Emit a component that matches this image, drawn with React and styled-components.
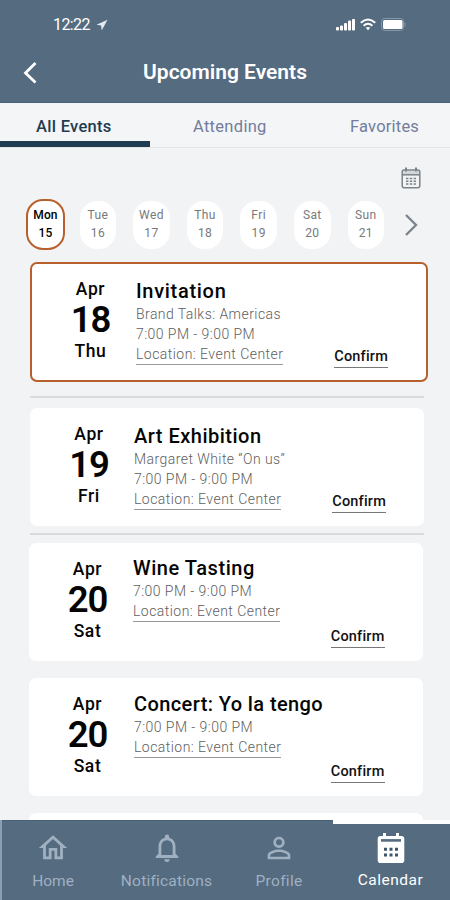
import React from 'react';
import styled, { createGlobalStyle, css } from 'styled-components';
import { MdOutlineHome, MdNotificationsNone, MdPersonOutline } from 'react-icons/md';


const colors = {
  slate: '#546b80',
  navy: '#1f3c50',
  page: '#f1f3f5',
  rust: '#b8602c',
  grey: '#77797b',
  muted: '#a0b0c1',
};

const GlobalStyle = createGlobalStyle`
  * {
    box-sizing: border-box;
  }

  body {
    margin: 0;
    font-family: Roboto, "Liberation Sans", sans-serif;
    background: ${colors.page};
  }
`;

const Screen = styled.div`
  display: flex;
  flex-direction: column;
  width: 450px;
  height: 900px;
  overflow: hidden;
  background: ${colors.page};
`;

const Header = styled.header`
  flex: none;
  height: 103px;
  background: ${colors.slate};
  border-bottom: 1px solid #47647e;
  color: #fff;
`;

const StatusBar = styled.div`
  display: flex;
  align-items: center;
  justify-content: space-between;
  height: 49px;
  padding: 0 44px 0 53px;
`;

const StatusGroup = styled.div`
  display: flex;
  align-items: center;
  gap: ${props => props.$gap}px;
`;

const Clock = styled.span`
  font-size: 16px;
  line-height: 20px;
  letter-spacing: -0.6px;
`;

const TitleBar = styled.div`
  display: grid;
  grid-template-columns: 60px 1fr 60px;
  align-items: center;
  height: 46px;

  svg {
    margin-left: 23px;
  }

  h1 {
    margin: 0;
    font-size: 21px;
    font-weight: 600;
    line-height: 26px;
    letter-spacing: 0;
    text-align: center;
  }
`;

const Tabs = styled.nav`
  display: grid;
  grid-template-columns: 150px 159px 141px;
  flex: none;
  height: 45px;
  background: #f3f5f7;
  border-bottom: 1px solid #e3e6e9;
`;

const Tab = styled.a`
  padding: 12px 0 0 ${props => props.$indent}px;
  font-size: 16.5px;
  line-height: 24px;
  letter-spacing: ${props => props.$spacing}px;
  color: #747c9c;

  ${props => props.$active && css`
    color: ${colors.navy};
    font-weight: 500;
    border-bottom: 6px solid ${colors.navy};
  `}
`;

const Toolbar = styled.div`
  display: flex;
  justify-content: flex-end;
  flex: none;
  height: 51px;
  padding: 19px 29px 0 0;
`;

const Week = styled.div`
  display: flex;
  align-items: center;
  flex: none;
  gap: 17px;
  height: 51px;
  padding-left: 26px;

  svg {
    margin-left: 3px;
  }
`;

const Day = styled.div`
  display: flex;
  flex-direction: column;
  align-items: center;
  justify-content: center;
  width: 36.6px;
  height: 48px;
  padding-bottom: 2px;
  border-radius: 17px;
  background: #fff;
  color: ${colors.grey};
  font-size: 12px;
  line-height: 18px;
  letter-spacing: 0.4px;

  ${props => props.$active && css`
    width: 39px;
    height: 51px;
    margin-right: -2.4px;
    border: 2px solid ${colors.rust};
    color: #000;
    font-weight: 500;
    letter-spacing: 0.1px;
  `}
`;

const List = styled.main`
  flex: 1;
  min-height: 0;
  padding: 12px 22px 0 28px;
  overflow: hidden;
`;

const Rule = styled.hr`
  width: 394px;
  height: 2px;
  margin: ${props => props.$margin};
  border: 0;
  background: #d8dbde;
`;

const Card = styled.article`
  display: grid;
  grid-template-columns: 75px 1fr auto;
  width: ${props => (props.$active ? 398 : 394)}px;
  height: ${props => (props.$active ? 120 : 118)}px;
  margin: 0 0 ${props => props.$gap || 0}px ${props => props.$shift || 0}px;
  padding: ${props => (props.$active ? '0 38px 12px 28px' : '0 38px 13px 27px')};
  border-radius: 7px;
  background: #fff;

  ${props => props.$active && css`
    border: 2px solid ${colors.rust};
  `}
`;

const DateBlock = styled.div`
  width: ${props => (props.$active ? 61 : 64)}px;
  padding-top: ${props => props.$top}px;
  font-size: 17.5px;
  font-weight: 500;
  line-height: 24px;
  letter-spacing: 0.6px;
  text-align: center;
  color: #050505;

  strong {
    display: block;
    font-size: 36.5px;
    font-weight: 600;
    line-height: 38px;
    letter-spacing: -1px;
  }
`;

const Details = styled.div`
  padding: ${props => props.$top}px 0 0 ${props => props.$indent}px;
  font-size: 14px;
  font-weight: 300;
  line-height: 20px;
  letter-spacing: 0.44px;
  color: #606060;
  white-space: nowrap;

  h2 {
    margin: 0;
    color: #050505;
    font-size: 20px;
    font-weight: 500;
    line-height: 25px;
    letter-spacing: ${props => props.$spacing}px;
  }
`;

const Location = styled.a`
  display: inline-block;
  border-bottom: 1px solid #999;
  letter-spacing: 0.46px;
`;

const Confirm = styled.a`
  align-self: end;
  border-bottom: 1.5px solid #777;
  color: #111;
  font-size: 14.5px;
  font-weight: 500;
  line-height: 20px;
  letter-spacing: 0.2px;
`;

const BottomNav = styled.nav`
  display: grid;
  grid-template-columns: 106px 117px 108px 117px;
  flex: none;
  height: 80px;
  border-left: 2px solid #8b9fb3;
  background: ${colors.slate};
`;

const NavItem = styled.a`
  display: flex;
  flex-direction: column;
  align-items: center;
  padding: 10px ${props => props.$inset || 0}px 0 0;
  border-top: 1px solid #47607a;
  color: ${colors.muted};
  font-size: 15.5px;
  letter-spacing: ${props => props.$spacing || 0}px;

  span {
    line-height: 22px;
    margin-top: 4.5px;
  }

  ${props => props.$active && css`
    padding-top: 8px;
    padding-left: 1px;
    border-top: 4px solid #fff;
    color: #fff;
  `}
`;

const LocationArrow = () => (
  <svg width="12" height="12" viewBox="0 0 12 12">
    <path d="M11.5 .8L.5 5.8l4.6.8.6 5z" fill="#e5eaee" />
  </svg>
);

const Signal = () => (
  <svg width="19" height="13" viewBox="0 0 19 13" fill="#fff">
    <rect x="0" y="9" width="3" height="3.5" rx="1" />
    <rect x="4" y="7.5" width="3" height="5" rx="1" />
    <rect x="8" y="5" width="3" height="7.5" rx="1" />
    <rect x="12" y="2.5" width="3" height="10" rx="1" />
    <rect x="16" y="1" width="3" height="11.5" rx="1" />
  </svg>
);

const Wifi = () => (
  <svg width="16" height="13" viewBox="0 0 16 13" fill="none" stroke="#fff" strokeWidth="2">
    <path d="M.8 4.8Q8-1.8 15.2 4.8M3.6 7.7q4.4-3.9 8.8 0" />
    <path d="M5.7 9.8L8 12.3l2.3-2.5Q8 8 5.7 9.8z" fill="#fff" stroke="none" />
  </svg>
);

const Battery = () => (
  <svg width="25" height="13" viewBox="0 0 25 13">
    <rect x=".5" y=".5" width="22" height="12" rx="3" fill="none" stroke="#8797a6" />
    <rect x="2" y="2" width="19.5" height="9" rx="1.5" fill="#fff" />
    <path d="M24 4.5v4" stroke="#8797a6" />
  </svg>
);

const Chevron = ({ color, d, width }) => (
  <svg width="14" height="24" viewBox="0 0 14 24" fill="none" stroke={color} strokeWidth={width}>
    <path d={d} />
  </svg>
);

const CalendarOutline = () => (
  <svg width="20" height="22" viewBox="0 0 20 22" fill="none" stroke="#7b8389" strokeWidth="1.5">
    <rect x="1.2" y="3" width="17.6" height="17.8" rx="2" />
    <path d="M2 4h16v3H2z" fill="#d3d7da" stroke="none" />
    <path d="M1.2 7.8h17.6" />
    <path d="M5 .5v4M15 .5v4" strokeWidth="2" />
    <path d="M5 11.5h2.4m1.4 0h2.4m1.4 0H15M5 14.2h2.4m1.4 0h2.4m1.4 0H15M5 17h2.4m1.4 0h2.4m1.4 0H15" strokeWidth="1.4" />
  </svg>
);

const CalendarSolid = () => (
  <svg width="28" height="32" viewBox="0 0 28 32">
    <path d="M6 1h3v3h10V1h3v3h2.5a2.8 2.8 0 0 1 2.8 2.8v21.4a2.8 2.8 0 0 1-2.8 2.8h-21A2.8 2.8 0 0 1 .7 28.2V6.8A2.8 2.8 0 0 1 3.5 4H6z" fill="#fff" />
    <path d="M4 8.4h20" stroke={colors.slate} strokeWidth="2.6" />
    <path d="M7 17.3h3m2.5 0h3m2.5 0h3M7 23h3m2.5 0h3m2.5 0h3" stroke="#3c566e" strokeWidth="3" />
  </svg>
);

const days = [
  ['Mon', 15], ['Tue', 16], ['Wed', 17], ['Thu', 18], ['Fri', 19], ['Sat', 20], ['Sun', 21],
];

const EventCard = ({
  day, weekday, title, subtitle, active, shift, gap, dateTop, top, indent, spacing = 0.5,
}) => (
  <Card $active={active} $shift={shift} $gap={gap}>
    <DateBlock $active={active} $top={dateTop}>
      Apr
      <strong>{day}</strong>
      {weekday}
    </DateBlock>
    <Details $top={top} $indent={indent} $spacing={spacing}>
      <h2>{title}</h2>
      {subtitle && <div>{subtitle}</div>}
      <div>7:00 PM - 9:00 PM</div>
      <Location>Location: Event Center</Location>
    </Details>
    <Confirm>Confirm</Confirm>
  </Card>
);

const App = () => {
  return (
    <Screen>
      <GlobalStyle />
      <Header>
        <StatusBar>
          <StatusGroup $gap={6}>
            <Clock>12:22</Clock>
            <LocationArrow />
          </StatusGroup>
          <StatusGroup $gap={5}>
            <Signal />
            <Wifi />
            <Battery />
          </StatusGroup>
        </StatusBar>
        <TitleBar>
          <Chevron color="#fff" d="M12.5 3l-10 10 10 9.5" width={2.8} />
          <h1>Upcoming Events</h1>
        </TitleBar>
      </Header>

      <Tabs>
        <Tab $active $indent={36} $spacing={0.3}>All Events</Tab>
        <Tab $indent={43} $spacing={0.3}>Attending</Tab>
        <Tab $indent={41} $spacing={0.2}>Favorites</Tab>
      </Tabs>

      <Toolbar>
        <CalendarOutline />
      </Toolbar>

      <Week>
        {days.map(([name, date]) => (
          <Day key={name} $active={name === 'Mon'}>
            <span>{name}</span>
            <span>{date}</span>
          </Day>
        ))}
        <Chevron color="#7d858c" d="M2 2l10 10L2 22" width={2.4} />
      </Week>

      <List>
        <EventCard
          day={18} weekday="Thu" title="Invitation" subtitle="Brand Talks: Americas"
          active shift={2} dateTop={13} top={15} indent={1} spacing={0.7}
        />
        <Rule $margin="14px 0 10px 2px" />
        <EventCard
          day={19} weekday="Fri" title="Art Exhibition" subtitle="Margaret White “On us”"
          shift={2} dateTop={14} top={16} indent={2}
        />
        <Rule $margin="7px 0 8px 2px" />
        <EventCard
          day={20} weekday="Sat" title="Wine Tasting"
          shift={0.5} gap={16.5} dateTop={14} top={13} indent={2.5} spacing={0.55}
        />
        <EventCard
          day={20} weekday="Sat" title="Concert: Yo la tengo"
          shift={0.5} gap={17} dateTop={14} top={14.5} indent={3.5} spacing={0.4}
        />
        <Card $shift={1} />
      </List>

      <BottomNav>
        <NavItem $inset={4}>
          <MdOutlineHome size={34} />
          <span>Home</span>
        </NavItem>
        <NavItem $spacing={0.2}>
          <MdNotificationsNone size={34} />
          <span>Notifications</span>
        </NavItem>
        <NavItem $spacing={0.3}>
          <MdPersonOutline size={34} />
          <span>Profile</span>
        </NavItem>
        <NavItem $active $inset={3} $spacing={0.5}>
          <CalendarSolid />
          <span>Calendar</span>
        </NavItem>
      </BottomNav>
    </Screen>
  );
};

export default App;
